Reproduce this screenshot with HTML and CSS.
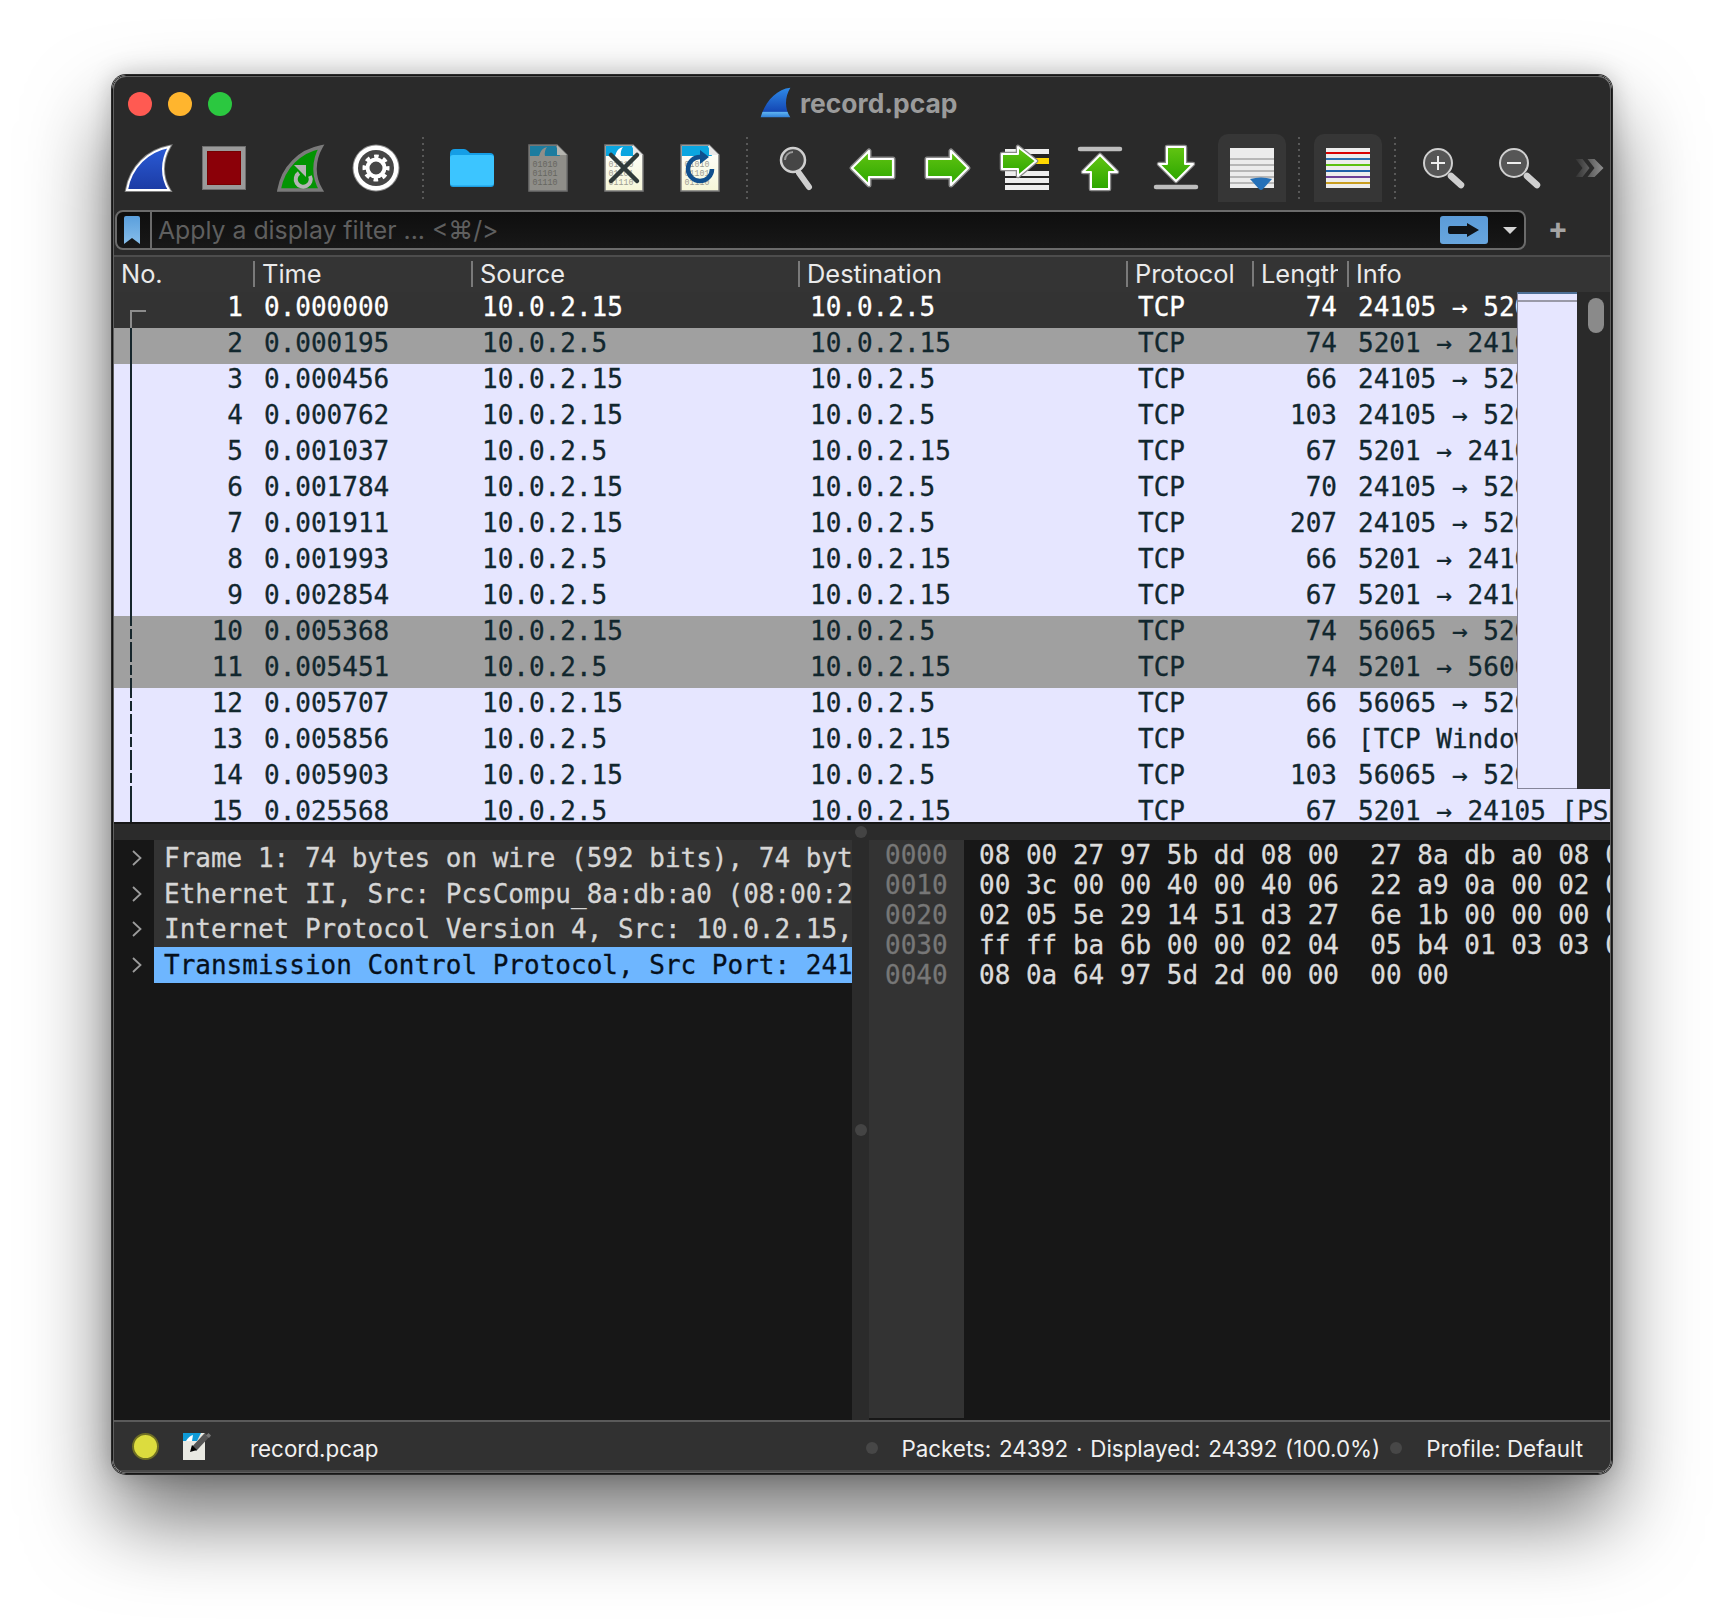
FILE: index.html
```html
<!DOCTYPE html>
<html lang="en">
<head>
    <meta charset="UTF-8">
    <meta name="viewport" content="width=device-width, initial-scale=1.0">
    <title>record.pcap</title>
    <link rel="stylesheet" href="styles.css">
</head>
<body>
    <svg class="svg-defs" aria-hidden="true">
        <defs>
            <linearGradient id="g-blue" x1="0" y1="0" x2="0" y2="1">
                <stop offset="0" stop-color="#2a5bd6"/>
                <stop offset="1" stop-color="#1c3ba4"/>
            </linearGradient>
            <linearGradient id="g-title" x1="0" y1="0" x2="0" y2="1">
                <stop offset="0" stop-color="#2f8be8"/>
                <stop offset="0.8" stop-color="#1447b4"/>
                <stop offset="0.82" stop-color="#5fb4f2"/>
                <stop offset="1" stop-color="#2f7fd8"/>
            </linearGradient>
            <linearGradient id="g-green" x1="0" y1="0" x2="0" y2="1">
                <stop offset="0" stop-color="#62c412"/>
                <stop offset="1" stop-color="#2ca600"/>
            </linearGradient>
            <linearGradient id="g-page" x1="0" y1="0" x2="0" y2="1">
                <stop offset="0" stop-color="#ffffff"/>
                <stop offset="1" stop-color="#f6f6d8"/>
            </linearGradient>
            <linearGradient id="g-mark" x1="0" y1="0" x2="0" y2="1">
                <stop offset="0" stop-color="#5a9fdc"/>
                <stop offset="1" stop-color="#86bdea"/>
            </linearGradient>
            <linearGradient id="g-more" x1="0" y1="0" x2="1" y2="0">
                <stop offset="0" stop-color="#333333"/>
                <stop offset="1" stop-color="#8e8e8e"/>
            </linearGradient>
            <symbol id="arrow-left" viewBox="0 0 48 48">
                <path d="M4 24 L21 7 V15 H45 V33 H21 V41Z" fill="none" stroke="#8a8a8a" stroke-width="5" stroke-linejoin="round"/>
                <path d="M4 24 L21 7 V15 H45 V33 H21 V41Z" fill="url(#g-green)" stroke="#fff" stroke-width="2.2" stroke-linejoin="round"/>
            </symbol>
        </defs>
    </svg>

    <div class="window">
        <div class="window-inner">
            <div class="titlebar">
                <div class="lights">
                    <span class="light red"></span>
                    <span class="light amber"></span>
                    <span class="light green"></span>
                </div>
                <div class="title">
                    <svg class="title-fin" viewBox="0 0 48 48"><path d="M47 1 C26 3 8 22 1 47 L47 47 C38 34 38 16 47 1Z" fill="url(#g-title)"/></svg>
                    <span>record.pcap</span>
                </div>
            </div>

            <div class="toolbar">
                <div class="tb-btn">
                    <svg viewBox="0 0 48 48"><path d="M45 3 C24 7 7 23 3 46 L45 46 C37 33 37 17 45 3Z" fill="none" stroke="#828282" stroke-width="4"/><path d="M45 3 C24 7 7 23 3 46 L45 46 C37 33 37 17 45 3Z" fill="url(#g-blue)" stroke="#fff" stroke-width="2"/></svg>
                </div>
                <div class="tb-btn">
                    <svg viewBox="0 0 48 48"><rect x="2" y="2" width="44" height="44" fill="#6e6e6e"/><rect x="3" y="3" width="42" height="42" fill="#9a9a9a"/><rect x="7" y="7" width="34" height="34" fill="#760000"/><rect x="8" y="8" width="32" height="32" fill="#8b0008"/></svg>
                </div>
                <div class="tb-btn">
                    <svg viewBox="0 0 48 48"><path d="M45 3 C24 7 7 23 3 46 L45 46 C37 33 37 17 45 3Z" fill="#029402" stroke="#7a7a7a" stroke-width="3.5"/><path d="M23 29 A7.5 7.5 0 1 0 34 32" fill="none" stroke="#b4b4b4" stroke-width="4"/><path d="M18 21 H30 V33Z" fill="#b4b4b4"/></svg>
                </div>
                <div class="tb-btn">
                    <svg viewBox="0 0 48 48"><circle cx="24" cy="24" r="23.5" fill="#8c8c8c"/><circle cx="24" cy="24" r="22.5" fill="#fff"/><circle cx="24" cy="24" r="18" fill="#464646"/><circle cx="24" cy="24" r="8.5" fill="none" stroke="#fff" stroke-width="4"/><circle cx="24" cy="24" r="11.5" fill="none" stroke="#fff" stroke-width="4" stroke-dasharray="4.5 4.53" stroke-dashoffset="2.2"/></svg>
                </div>
                <span class="tb-sep"></span>
                <div class="tb-btn">
                    <svg viewBox="0 0 48 48"><path d="M2 10 Q2 5 7 5 H16 Q18 5 20 7 L22 9 H42 Q46 9 46 13 V22 H2Z" fill="#159ee6"/><rect x="2" y="11" width="44" height="32" rx="3" fill="#1f9fe2"/><rect x="2" y="11" width="44" height="30.5" rx="3" fill="#3cc5ff"/></svg>
                </div>
                <div class="tb-btn">
                    <svg viewBox="0 0 48 48"><path d="M5 1 H33 L43 11 V47 H5Z" fill="#8f8e89" stroke="#6f6f6f" stroke-width="1.5"/><path d="M6 2 H32 L36 12 H6Z" fill="#1c7c9f"/><path d="M15 12 Q17 4 23 3 Q20 7 21 12Z" fill="#8f8e89"/><path d="M33 1 L43 11 H33Z" fill="#b5b5b0"/><text class="bits dim" x="8.5" y="23">01010</text><text class="bits dim" x="8.5" y="32">01101</text><text class="bits dim" x="8.5" y="41">01110</text></svg>
                </div>
                <div class="tb-btn">
                    <svg viewBox="0 0 48 48"><path d="M5 1 H33 L43 11 V47 H5Z" fill="url(#g-page)" stroke="#7a7a7a" stroke-width="1.5"/><path d="M6 2 H32 L36 12 H6Z" fill="#0ba6e0"/><path d="M15 12 Q17 4 23 3 Q20 7 21 12Z" fill="#fff"/><path d="M33 1 L43 11 H33Z" fill="#e8e8e8"/><text class="bits" x="8.5" y="23">01010</text><text class="bits" x="8.5" y="32">01101</text><text class="bits" x="8.5" y="41">01110</text><path d="M11 11 L37 37 M37 11 L11 37" stroke="#2f3a3a" stroke-width="4.5" stroke-linecap="round"/></svg>
                </div>
                <div class="tb-btn">
                    <svg viewBox="0 0 48 48"><path d="M5 1 H33 L43 11 V47 H5Z" fill="url(#g-page)" stroke="#7a7a7a" stroke-width="1.5"/><path d="M6 2 H32 L36 12 H6Z" fill="#0ba6e0"/><path d="M33 1 L43 11 H33Z" fill="#e8e8e8"/><text class="bits" x="8.5" y="23">01010</text><text class="bits" x="8.5" y="32">01101</text><text class="bits" x="8.5" y="41">01110</text><path d="M24 13 A12 12 0 1 0 36 25" fill="none" stroke="#10508e" stroke-width="4.5"/><path d="M24 6 L33 13 L24 20Z" fill="#10508e"/></svg>
                </div>
                <span class="tb-sep"></span>
                <div class="tb-btn">
                    <svg viewBox="0 0 48 48"><circle cx="21" cy="16" r="12" fill="#464646" stroke="#cfcfcf" stroke-width="2.5"/><path d="M13 16 A8 8 0 0 1 21 8" fill="none" stroke="#9a9a9a" stroke-width="2"/><path d="M27 29 L37 43" stroke="#cfcfcf" stroke-width="6" stroke-linecap="round"/></svg>
                </div>
                <div class="tb-btn">
                    <svg viewBox="0 0 48 48"><use href="#arrow-left"/></svg>
                </div>
                <div class="tb-btn flip">
                    <svg viewBox="0 0 48 48"><use href="#arrow-left"/></svg>
                </div>
                <div class="tb-btn">
                    <svg viewBox="0 0 48 48">
                        <rect x="5" y="5" width="44" height="41" fill="#262626"/>
                        <g fill="#eeeeee"><rect x="5" y="5" width="44" height="5"/><rect x="5" y="27" width="44" height="5"/><rect x="5" y="34" width="44" height="5"/><rect x="5" y="41" width="44" height="5"/></g>
                        <rect x="5" y="14" width="44" height="6" fill="#ffd800"/>
                        <path d="M36 17 L18 3 V10 H2 V25 H18 V32Z" fill="none" stroke="#8a8a8a" stroke-width="4.5" stroke-linejoin="round"/>
                        <path d="M36 17 L18 3 V10 H2 V25 H18 V32Z" fill="url(#g-green)" stroke="#fff" stroke-width="2" stroke-linejoin="round"/>
                    </svg>
                </div>
                <div class="tb-btn">
                    <svg viewBox="0 0 48 48">
                        <path d="M4 5 H44" stroke="#bdbdbd" stroke-width="4.5" stroke-linecap="round"/>
                        <path d="M24 11 L41 28 H33 V45 H15 V28 H7Z" fill="none" stroke="#8a8a8a" stroke-width="4.5" stroke-linejoin="round"/>
                        <path d="M24 11 L41 28 H33 V45 H15 V28 H7Z" fill="url(#g-green)" stroke="#fff" stroke-width="2" stroke-linejoin="round"/>
                    </svg>
                </div>
                <div class="tb-btn">
                    <svg viewBox="0 0 48 48">
                        <path d="M4 43 H44" stroke="#bdbdbd" stroke-width="4.5" stroke-linecap="round"/>
                        <path d="M15 3 H33 V20 H41 L24 37 L7 20 H15Z" fill="none" stroke="#8a8a8a" stroke-width="4.5" stroke-linejoin="round"/>
                        <path d="M15 3 H33 V20 H41 L24 37 L7 20 H15Z" fill="url(#g-green)" stroke="#fff" stroke-width="2" stroke-linejoin="round"/>
                    </svg>
                </div>
                <div class="tb-btn on">
                    <svg viewBox="0 0 48 48">
                        <rect x="2" y="4" width="44" height="40" fill="#ececec"/>
                        <g fill="#b7b7b7"><rect x="2" y="14" width="44" height="2"/><rect x="2" y="20" width="44" height="2"/><rect x="2" y="26" width="44" height="2"/><rect x="2" y="32" width="44" height="2"/><rect x="2" y="38" width="44" height="2"/></g>
                        <path d="M22 35 Q33 32 44 35 L35 45 Q33 47 31 45Z" fill="#2470b8"/>
                    </svg>
                </div>
                <span class="tb-sep"></span>
                <div class="tb-btn on">
                    <svg viewBox="0 0 48 48">
                        <rect x="2" y="4" width="44" height="40" fill="#ececec"/>
                        <rect x="2" y="8" width="44" height="2" fill="#d80000"/>
                        <rect x="2" y="14" width="44" height="2" fill="#2a6eb0"/>
                        <rect x="2" y="20" width="44" height="2" fill="#5cc010"/>
                        <rect x="2" y="26" width="44" height="2" fill="#1d5fa8"/>
                        <rect x="2" y="32" width="44" height="2" fill="#6b3e96"/>
                        <rect x="2" y="38" width="44" height="2" fill="#c89d20"/>
                    </svg>
                </div>
                <span class="tb-sep"></span>
                <div class="tb-btn">
                    <svg viewBox="0 0 48 48"><circle cx="18" cy="19" r="14" fill="#565656" stroke="#cfcfcf" stroke-width="2"/><path d="M11 19 H25 M18 12 V26" stroke="#eee" stroke-width="2"/><path d="M31 32 L41 41" stroke="#cfcfcf" stroke-width="6.5" stroke-linecap="round"/></svg>
                </div>
                <div class="tb-btn">
                    <svg viewBox="0 0 48 48"><circle cx="18" cy="19" r="14" fill="#565656" stroke="#cfcfcf" stroke-width="2"/><path d="M11 19 H25" stroke="#eee" stroke-width="2"/><path d="M31 32 L41 41" stroke="#cfcfcf" stroke-width="6.5" stroke-linecap="round"/></svg>
                </div>
                <div class="tb-more">
                    <svg viewBox="0 0 30 20"><path d="M1 1 H8 L15 10 L8 19 H1 L8 10Z M13 1 H20 L29 10 L20 19 H13 L20 10Z" fill="url(#g-more)"/></svg>
                </div>
            </div>

            <div class="filter-row">
                <div class="filter-box">
                    <svg class="bookmark" viewBox="0 0 16 28"><path d="M0 2 Q0 0 2 0 H14 Q16 0 16 2 V28 L8 22 L0 28Z" fill="url(#g-mark)"/></svg>
                    <span class="filter-text">Apply a display filter ... &lt;⌘/&gt;</span>
                    <span class="apply-btn">
                        <svg viewBox="0 0 32 14"><path d="M2 3 H19 V0 L31 7 L19 14 V11 H2 Q0 11 0 9 V5 Q0 3 2 3Z" fill="#101418"/></svg>
                    </span>
                    <span class="filter-drop"></span>
                </div>
                <span class="filter-plus">+</span>
            </div>

            <div class="pkt-head">
                <span>No.</span>
                <span class="sep">Time</span>
                <span class="sep">Source</span>
                <span class="sep">Destination</span>
                <span class="sep">Protocol</span>
                <span class="sep clip">Length</span>
                <span class="sep">Info</span>
            </div>

            <div class="pkt-list">
                <div class="pkt current"><i class="rel first"></i><span class="no">1</span><span>0.000000</span><span>10.0.2.15</span><span>10.0.2.5</span><span>TCP</span><span class="no">74</span><span>24105 → 5201 [SYN]</span></div>
                <div class="pkt grey"><i class="rel"></i><span class="no">2</span><span>0.000195</span><span>10.0.2.5</span><span>10.0.2.15</span><span>TCP</span><span class="no">74</span><span>5201 → 24105 [SYN, ACK]</span></div>
                <div class="pkt"><i class="rel"></i><span class="no">3</span><span>0.000456</span><span>10.0.2.15</span><span>10.0.2.5</span><span>TCP</span><span class="no">66</span><span>24105 → 5201 [ACK]</span></div>
                <div class="pkt"><i class="rel"></i><span class="no">4</span><span>0.000762</span><span>10.0.2.15</span><span>10.0.2.5</span><span>TCP</span><span class="no">103</span><span>24105 → 5201 [PSH, ACK]</span></div>
                <div class="pkt"><i class="rel"></i><span class="no">5</span><span>0.001037</span><span>10.0.2.5</span><span>10.0.2.15</span><span>TCP</span><span class="no">67</span><span>5201 → 24105 [PSH, ACK]</span></div>
                <div class="pkt"><i class="rel"></i><span class="no">6</span><span>0.001784</span><span>10.0.2.15</span><span>10.0.2.5</span><span>TCP</span><span class="no">70</span><span>24105 → 5201 [PSH, ACK]</span></div>
                <div class="pkt"><i class="rel"></i><span class="no">7</span><span>0.001911</span><span>10.0.2.15</span><span>10.0.2.5</span><span>TCP</span><span class="no">207</span><span>24105 → 5201 [PSH, ACK]</span></div>
                <div class="pkt"><i class="rel"></i><span class="no">8</span><span>0.001993</span><span>10.0.2.5</span><span>10.0.2.15</span><span>TCP</span><span class="no">66</span><span>5201 → 24105 [ACK]</span></div>
                <div class="pkt"><i class="rel"></i><span class="no">9</span><span>0.002854</span><span>10.0.2.5</span><span>10.0.2.15</span><span>TCP</span><span class="no">67</span><span>5201 → 24105 [PSH, ACK]</span></div>
                <div class="pkt grey"><i class="rel dash"></i><span class="no">10</span><span>0.005368</span><span>10.0.2.15</span><span>10.0.2.5</span><span>TCP</span><span class="no">74</span><span>56065 → 5201 [SYN]</span></div>
                <div class="pkt grey"><i class="rel dash"></i><span class="no">11</span><span>0.005451</span><span>10.0.2.5</span><span>10.0.2.15</span><span>TCP</span><span class="no">74</span><span>5201 → 56065 [SYN, ACK]</span></div>
                <div class="pkt"><i class="rel dash"></i><span class="no">12</span><span>0.005707</span><span>10.0.2.15</span><span>10.0.2.5</span><span>TCP</span><span class="no">66</span><span>56065 → 5201 [ACK]</span></div>
                <div class="pkt"><i class="rel dash"></i><span class="no">13</span><span>0.005856</span><span>10.0.2.5</span><span>10.0.2.15</span><span>TCP</span><span class="no">66</span><span>[TCP Window Update]</span></div>
                <div class="pkt"><i class="rel dash"></i><span class="no">14</span><span>0.005903</span><span>10.0.2.15</span><span>10.0.2.5</span><span>TCP</span><span class="no">103</span><span>56065 → 5201 [PSH, ACK]</span></div>
                <div class="pkt wide"><i class="rel"></i><span class="no">15</span><span>0.025568</span><span>10.0.2.5</span><span>10.0.2.15</span><span>TCP</span><span class="no">67</span><span>5201 → 24105 [PSH, ACK]</span></div>

                <div class="scroll-side">
                    <div class="minimap"></div>
                    <div class="scroll-track"><span class="thumb"></span></div>
                </div>
            </div>

            <div class="split-h"><span class="handle"></span></div>

            <div class="panes">
                <div class="detail">
                    <div class="tree-row"><svg class="chev" viewBox="0 0 10 16"><path d="M1 1 L8.5 8 L1 15"/></svg><span class="tree-text">Frame 1: 74 bytes on wire (592 bits), 74 bytes captured (592 bits)</span></div>
                    <div class="tree-row"><svg class="chev" viewBox="0 0 10 16"><path d="M1 1 L8.5 8 L1 15"/></svg><span class="tree-text">Ethernet II, Src: PcsCompu_8a:db:a0 (08:00:27:8a:db:a0)</span></div>
                    <div class="tree-row"><svg class="chev" viewBox="0 0 10 16"><path d="M1 1 L8.5 8 L1 15"/></svg><span class="tree-text">Internet Protocol Version 4, Src: 10.0.2.15, Dst: 10.0.2.5</span></div>
                    <div class="tree-row selected"><svg class="chev" viewBox="0 0 10 16"><path d="M1 1 L8.5 8 L1 15"/></svg><span class="tree-text">Transmission Control Protocol, Src Port: 24105, Dst Port: 5201</span></div>
                </div>
                <div class="split-v"><span class="handle"></span></div>
                <div class="hex">
                    <div class="hex-offsets">0000
0010
0020
0030
0040</div>
                    <div class="hex-bytes">08 00 27 97 5b dd 08 00  27 8a db a0 08 00 45 00
00 3c 00 00 40 00 40 06  22 a9 0a 00 02 0f 0a 00
02 05 5e 29 14 51 d3 27  6e 1b 00 00 00 00 a0 02
ff ff ba 6b 00 00 02 04  05 b4 01 03 03 07 04 02
08 0a 64 97 5d 2d 00 00  00 00</div>
                </div>
            </div>

            <div class="statusbar">
                <span class="led"></span>
                <svg class="comment-icon" viewBox="0 0 28 28">
                    <rect x="0" y="1" width="22" height="27" fill="#e9e9e2"/>
                    <path d="M0 1 H18 L14 9 H0Z" fill="#0f9ad6"/>
                    <path d="M3 9 Q6 4 10 3 L9 9Z" fill="#fff"/>
                    <path d="M24 3 L11 17" stroke="#555" stroke-width="6"/>
                    <path d="M25.5 1 L28 3.5 L26 6 L23 3.5Z" fill="#777"/>
                    <path d="M7 20 L9 13 L14 18Z" fill="#000"/>
                </svg>
                <span class="status-file">record.pcap</span>
                <div class="status-right">
                    <span class="status-dot"></span>
                    <span class="status-packets">Packets: 24392 · Displayed: 24392 (100.0%)</span>
                    <span class="status-dot"></span>
                    <span class="status-profile">Profile: Default</span>
                </div>
            </div>
        </div>
    </div>
</body>
</html>
```

FILE: styles.css
```css
* {
    margin: 0;
    padding: 0;
    box-sizing: border-box;
}

body {
    background: #fff;
    padding: 75px 112px 0;
    height: 1622px;
    overflow: hidden;
    font-family: Inter, 'Liberation Sans', sans-serif;
}

.svg-defs {
    position: absolute;
    width: 0;
    height: 0;
}

.window {
    width: 1500px;
    height: 1399px;
    border: 1px solid #161616;
    border-radius: 14px;
    box-shadow: 0 0 0 1px #2a2a2a, 0 44px 84px rgba(0, 0, 0, 0.56), 0 0 24px rgba(0, 0, 0, 0.22);
}

.window-inner {
    height: 100%;
    border: 1px solid #606060;
    border-radius: 13px;
    background: #2a2a2a;
    display: flex;
    flex-direction: column;
    overflow: hidden;
}

/* title bar */
.titlebar {
    flex: 0 0 57px;
    display: flex;
    align-items: center;
    padding: 0 0 3px 14px;
}

.lights {
    display: flex;
    gap: 16px;
}

.light {
    width: 24px;
    height: 24px;
    border-radius: 50%;
}

.light.red { background: #ff5a52; }
.light.amber { background: #ffb52e; }
.light.green { background: #2bc840; }

.title {
    margin: 0 0 3px 528px;
    display: flex;
    align-items: center;
    gap: 9px;
    font-size: 26.4px;
    font-weight: 700;
    color: #9b9b9b;
}

.title-fin {
    width: 31px;
    height: 31px;
}

/* toolbar */
.toolbar {
    flex: 0 0 76px;
    display: flex;
    align-items: flex-start;
    gap: 8px;
}

.tb-btn {
    flex: 0 0 68px;
    height: 68px;
    border-radius: 10px 10px 0 0;
    display: flex;
    align-items: center;
    justify-content: center;
}

.tb-btn svg {
    width: 48px;
    height: 48px;
    overflow: visible;
}

.tb-btn.on {
    background: #363636;
}

.tb-btn.flip svg {
    transform: scaleX(-1);
}

.tb-sep {
    flex: 0 0 2px;
    height: 62px;
    margin: 3px 6px 0 4px;
    background: repeating-linear-gradient(to bottom, #585858 0, #585858 2px, transparent 2px, transparent 6px);
}

.tb-more {
    flex: 0 0 54px;
    height: 68px;
    display: flex;
    align-items: center;
    justify-content: center;
}

.tb-more svg {
    width: 31px;
    height: 20px;
}

.bits {
    font-family: 'Liberation Mono', monospace;
    font-size: 8.3px;
    fill: #9c9c90;
}

.bits.dim {
    fill: #666660;
}

/* display filter */
.filter-row {
    flex: 0 0 45px;
    display: flex;
    align-items: flex-start;
    padding-left: 1px;
}

.filter-box {
    width: 1411px;
    height: 40px;
    border: 2px solid #6b6b6b;
    border-radius: 8px;
    background: linear-gradient(to bottom, #0e0e0e, #181818);
    display: flex;
    align-items: center;
    padding-right: 6px;
}

.bookmark {
    width: 16px;
    height: 28px;
    margin-left: 7px;
}

.filter-text {
    flex: 1;
    height: 100%;
    margin-left: 10px;
    padding-left: 6px;
    border-left: 2px solid #6b6b6b;
    font-size: 24.8px;
    line-height: 36px;
    color: #5f5f5f;
    white-space: nowrap;
}

.apply-btn {
    width: 48px;
    height: 28px;
    border-radius: 3px;
    background: linear-gradient(to bottom, #5b9bd8, #68a6de);
    display: flex;
    align-items: center;
    justify-content: center;
}

.apply-btn svg {
    width: 32px;
    height: 14px;
}

.filter-drop {
    margin: 0 1px 0 15px;
    border-left: 7px solid transparent;
    border-right: 7px solid transparent;
    border-top: 7px solid #d4d4d4;
}

.filter-plus {
    width: 40px;
    margin-left: 12px;
    text-align: center;
    font-size: 30px;
    font-weight: 700;
    line-height: 36px;
    color: #a4a4a4;
}

/* packet list */
.pkt-head,
.pkt {
    display: grid;
}

.pkt-head {
    flex: 0 0 37px;
    grid-template-columns: 139px 218px 327px 328px 126px 95px 170px;
    border-top: 2px solid #4d4d4d;
    background: #343434;
    align-items: center;
    padding-bottom: 2px;
    font-size: 25.4px;
    color: #eaeaea;
    white-space: nowrap;
}

.pkt-head span {
    padding-left: 7px;
    line-height: 26px;
    overflow: hidden;
}

.pkt-head .sep {
    border-left: 2px solid #7a7a7a;
}

.pkt-head .clip {
    clip-path: inset(0 9px 0 0);
}

.pkt-list {
    flex: 0 0 530px;
    position: relative;
    overflow: hidden;
}

.pkt {
    grid-template-columns: 139px 218px 328px 328px 125px 95px 170px;
    position: relative;
    height: 36px;
    background: #e6e6ff;
    font-family: 'DejaVu Sans Mono', 'Liberation Mono', monospace;
    font-size: 26px;
    line-height: 30px;
    color: #12272e;
    white-space: pre;
    -webkit-text-stroke: 0.3px;
}

.pkt span {
    padding-left: 11px;
    overflow: hidden;
}

.pkt .no {
    padding: 0 10px 0 0;
    text-align: right;
}

.pkt.grey {
    background: #a0a0a0;
}

.pkt.current {
    background: #333;
    color: #fff;
}

.pkt.wide {
    grid-template-columns: 139px 218px 328px 328px 125px 95px 263px;
}

.rel {
    position: absolute;
    left: 16px;
    top: 0;
    bottom: 0;
    border-left: 2px solid #16262c;
}

.rel.first {
    top: 18px;
    width: 16px;
    border-left-color: #8c8c8c;
    border-top: 2px solid #8c8c8c;
}

.rel.dash {
    border-left: 0;
    width: 2px;
    background: repeating-linear-gradient(to bottom, #16262c 0, #16262c 10px, transparent 10px, transparent 13px);
}

.scroll-side {
    position: absolute;
    top: 0;
    right: 0;
    width: 93px;
    height: 497px;
    display: flex;
}

.minimap {
    flex: 0 0 60px;
    background: #e6e6ff;
    border-top: 2px solid #4d6f96;
    border-left: 1px solid #85859a;
    border-bottom: 1px solid #85859a;
    position: relative;
    background-image: linear-gradient(#9a9aa8, #9a9aa8);
    background-size: 100% 2px;
    background-position: 0 6px;
    background-repeat: no-repeat;
}

.scroll-track {
    flex: 1;
    background: #2a2a2a;
    padding: 6px 6px 0 11px;
}

.thumb {
    display: block;
    width: 16px;
    height: 35px;
    border-radius: 8px;
    background: #8a8a8a;
}

/* splitters */
.split-h {
    flex: 0 0 18px;
    background: #2b2b2b;
    border-top: 2px solid #161616;
    padding-left: 741px;
    display: flex;
    align-items: center;
}

.split-v {
    flex: 0 0 17px;
    background: #2b2b2b;
    display: flex;
    align-items: center;
    justify-content: center;
}

.handle {
    width: 12px;
    height: 12px;
    border-radius: 50%;
    background: #444;
}

.panes {
    flex: 0 0 580px;
    display: flex;
    background: #171717;
    font-family: 'DejaVu Sans Mono', 'Liberation Mono', monospace;
    font-size: 26px;
    -webkit-text-stroke: 0.3px;
}

/* packet details */
.detail {
    flex: 0 0 738px;
    overflow: hidden;
}

.tree-row {
    height: 36px;
    margin-top: -0.2px;
    display: flex;
    align-items: center;
}

.chev {
    flex: 0 0 10px;
    height: 16px;
    margin: 0 12px 0 18px;
    fill: none;
    stroke: #9c9c9c;
    stroke-width: 1.8;
}

.tree-text {
    flex: 1;
    height: 100%;
    padding-left: 10px;
    line-height: 36px;
    background: #333;
    color: #d6d6d6;
    white-space: pre;
    overflow: hidden;
}

.tree-row.selected .tree-text {
    background: #6eb6ff;
    color: #06101c;
}

/* packet bytes */
.hex {
    flex: 1;
    display: flex;
    overflow: hidden;
    line-height: 30px;
    white-space: pre;
}

.hex-offsets {
    flex: 0 0 95px;
    margin-bottom: 2px;
    padding-left: 16px;
    background: #333;
    color: #777;
}

.hex-bytes {
    flex: 1;
    padding-left: 15px;
    color: #dcdcdc;
    overflow: hidden;
}

/* status bar */
.statusbar {
    flex: 0 0 52px;
    border-top: 2px solid #5a5a5a;
    border-bottom: 2px solid #4a4a4a;
    background: #313131;
    display: flex;
    align-items: center;
    padding-right: 27px;
    font-size: 22.4px;
    color: #f0f0f0;
    white-space: nowrap;
}

.led {
    width: 27px;
    height: 27px;
    margin-left: 18px;
    border-radius: 50%;
    border: 2px solid #6e6e24;
    background: #dcdc3e;
}

.comment-icon {
    width: 28px;
    height: 28px;
    margin-left: 24px;
}

.status-file {
    margin: 4px 0 0 39px;
}

.status-right {
    margin: 4px 0 0 auto;
    display: flex;
    align-items: center;
}

.status-dot {
    width: 12px;
    height: 12px;
    border-radius: 50%;
    background: #474747;
}

.status-packets {
    margin: 0 10px 0 23px;
    word-spacing: 1.5px;
}

.status-profile {
    margin-left: 24px;
}
```
